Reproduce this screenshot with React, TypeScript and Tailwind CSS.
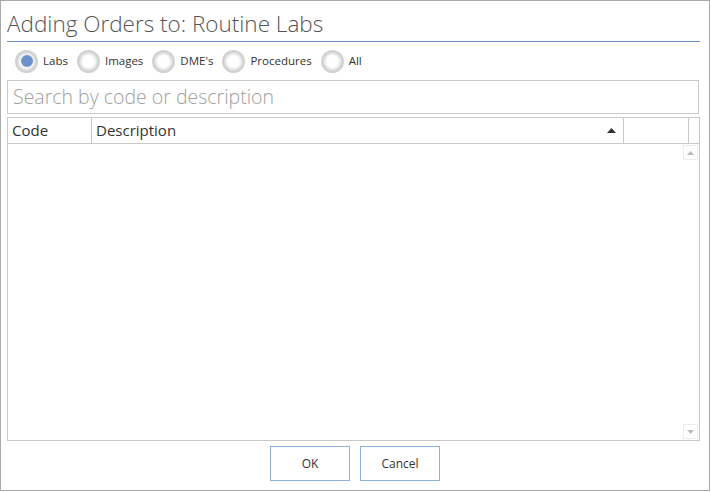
import React from 'react';

const filters = ['Labs', 'Images', "DME's", 'Procedures', 'All'];

const Radio = ({ label, checked }: { label: string; checked: boolean }) => (
  <label className="flex items-center gap-[5px]">
    <span className="w-[23px] h-[23px] rounded-full bg-[radial-gradient(circle,#ffffff_35%,#cfcfcf_62%,#dedede_85%,#ececec_100%)] flex items-center justify-center">
      {checked && <span className="w-[12px] h-[12px] rounded-full bg-[#6a93cc]" />}
    </span>
    <span className="text-[11.5px] text-[#333]">{label}</span>
  </label>
);

export default function App() {
  return (
    <div className="w-[711px] h-[492px] bg-white font-['Open_Sans',sans-serif]">
      <div className="w-[710px] h-[491px] border border-[#a9a9a9] flex flex-col px-[6px]">
        <h1 className="text-[22.5px] font-light text-[#555] leading-[22px] pt-[12px] pb-[6px] border-b border-[#6a8fc6] mr-[3px]">
          Adding Orders to: Routine Labs
        </h1>
        <div className="flex items-center gap-[9px] pl-[8px] h-[38px]">
          {filters.map((f, i) => (
            <Radio key={f} label={f} checked={i === 0} />
          ))}
        </div>
        <div className="h-[34px] border border-[#c8c8c8] flex items-center px-[5px] mr-[4px]">
          <span className="text-[19.5px] font-light text-[#a0a0a0]">Search by code or description</span>
        </div>
        <div className="mt-[3px] mr-[3px] h-[324px] border border-[#c8c8c8] flex flex-col">
          <div className="flex h-[26px] border-b border-[#c8c8c8] text-[15px] text-[#333]">
            <div className="w-[84px] border-r border-[#c8c8c8] flex items-center pl-[4px]">Code</div>
            <div className="w-[532px] border-r border-[#c8c8c8] flex items-center justify-between pl-[4px] pr-[7px]">
              <span>Description</span>
              <svg width="9" height="5" viewBox="0 0 9 5"><path d="M0 5 L4.5 0 L9 5 Z" fill="#333" /></svg>
            </div>
            <div className="w-[65px] border-r border-[#c8c8c8]" />
            <div className="flex-1" />
          </div>
          <div className="flex-1 flex justify-end pr-[1px] py-[1px]">
            <div className="w-[15px] flex flex-col justify-between">
              <div className="h-[15px] border border-[#ececec] flex items-center justify-center">
                <svg width="7" height="4" viewBox="0 0 7 4"><path d="M0 4 L3.5 0 L7 4 Z" fill="#bbb" /></svg>
              </div>
              <div className="h-[15px] border border-[#ececec] flex items-center justify-center">
                <svg width="7" height="4" viewBox="0 0 7 4"><path d="M0 0 L3.5 4 L7 0 Z" fill="#bbb" /></svg>
              </div>
            </div>
          </div>
        </div>
        <div className="flex justify-center gap-[10px] pt-[5px]">
          <button type="button" className="w-[80px] h-[35px] border border-[#8fb0dc] text-[12px] text-[#333] bg-white">
            OK
          </button>
          <button type="button" className="w-[80px] h-[35px] border border-[#8fb0dc] text-[12px] text-[#333] bg-white">
            Cancel
          </button>
        </div>
      </div>
    </div>
  );
}
